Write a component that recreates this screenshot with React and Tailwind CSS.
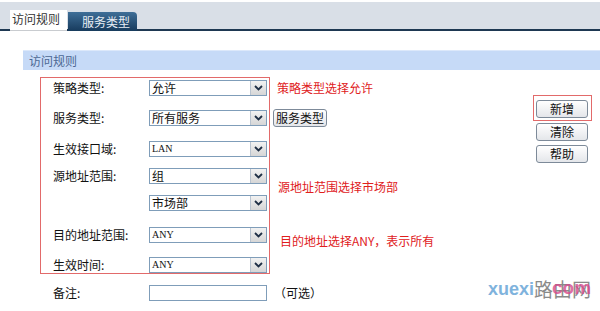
import React from 'react';

const Chevron = () => (
  <svg width="9" height="6" viewBox="0 0 9 6" className="block">
    <path d="M1 1 L4.5 4.5 L8 1" fill="none" stroke="#1f2f45" strokeWidth="1.8" />
  </svg>
);

const Select = ({ value, serif = false }) => (
  <div className="w-[118px] h-[16px] border border-[#7f9db9] bg-white flex items-stretch">
    <div
      className={`flex-1 pl-[2px] leading-[14px] text-[#111] ${
        serif ? "font-['Liberation_Serif',serif] text-[10px]" : 'text-[12px]'
      }`}
    >
      {value}
    </div>
    <div className="w-[16px] border-l border-[#b9c3cf] bg-gradient-to-b from-[#f2f2f2] to-[#d6d6d6] flex items-center justify-center">
      <Chevron />
    </div>
  </div>
);

const Btn = ({ children, className = '' }) => (
  <div
    className={`h-[18px] border border-[#7d8a99] rounded-[3px] bg-gradient-to-b from-[#ffffff] to-[#e4e6ea] flex items-center justify-center text-[12px] text-[#111] leading-none ${className}`}
  >
    {children}
  </div>
);

const Row = ({ label, value, serif, className = '' }) => (
  <div className={`flex items-center h-[16px] ${className}`}>
    <div className="w-[108px] shrink-0 pl-[12px] text-[12px] text-[#111] leading-none">{label}</div>
    <Select value={value} serif={serif} />
  </div>
);

const App = () => {
  return (
    <div className="w-[600px] h-[311px] bg-white relative overflow-hidden font-['Noto_Sans_CJK_SC','Noto_Sans',sans-serif] text-[12px]">
      {/* tab strip */}
      <div className="pt-[2px]">
        <div className="h-[29px] bg-[#d9dfe7] border-b-2 border-[#1e3852] flex items-end pl-[10px]">
          <div className="w-[57px] h-[21px] -mb-[2px] bg-white border-b border-[#c9ccd0] pl-[2px] pt-[1px] text-[12px] text-[#333] leading-[16px]">
            访问规则
          </div>
          <div className="w-[69px] h-[19px] -mb-[2px] ml-[1px] rounded-tr-[4px] bg-gradient-to-b from-[#3f6f98] to-[#173b5d] text-[#e8eef5] text-[12px] leading-[19px] pl-[14px]">
            服务类型
          </div>
        </div>
      </div>

      {/* section header */}
      <div className="mt-[19px] ml-[23px] h-[20px] bg-[#c6daf7] border-t border-[#dce8fa] pl-[6px] text-[12px] leading-[19px] text-[#4c6893]">
        访问规则
      </div>

      {/* form area */}
      <div className="flex mt-[7px]">
        <div className="pl-[40px]">
          <div className="w-[230px] h-[197px] border border-[#e26a6a]">
            <Row label="策略类型:" value="允许" className="mt-[2px]" />
            <Row label="服务类型:" value="所有服务" className="mt-[14px]" />
            <Row label="生效接口域:" value="LAN" serif className="mt-[15px]" />
            <Row label="源地址范围:" value="组" className="mt-[11px]" />
            <Row label="" value="市场部" className="mt-[11px]" />
            <Row label="目的地址范围:" value="ANY" serif className="mt-[16px]" />
            <Row label="生效时间:" value="ANY" serif className="mt-[14px]" />
          </div>
        </div>

        <div className="flex flex-col items-start ml-[3px]">
          <div className="mt-[3px] h-[16px] pl-[4px] leading-[16px] text-[12px] text-[#e0201c]">策略类型选择允许</div>
          <Btn className="mt-[13px] w-[54px]">服务类型</Btn>
          <div className="mt-[52px] h-[16px] pl-[5px] leading-[16px] text-[12px] text-[#e0201c]">源地址范围选择市场部</div>
          <div className="mt-[38px] h-[16px] pl-[7px] leading-[16px] text-[12px] text-[#e0201c]">目的地址选择ANY，表示所有</div>
        </div>

        <div className="ml-auto mr-[8px] flex flex-col items-start">
          <div className="mt-[18px] border border-[#e26a6a] pt-[4px] pb-[2px] pl-[2px] pr-[3px]">
            <Btn className="w-[52px]">新增</Btn>
          </div>
          <Btn className="w-[52px] ml-[3px] mt-[2px]">清除</Btn>
          <Btn className="w-[52px] ml-[3px] mt-[4px]">帮助</Btn>
        </div>
      </div>

      {/* remark row */}
      <div className="flex items-center h-[16px] mt-[11px] pl-[40px]">
        <div className="w-[109px] pl-[13px] text-[12px] text-[#111] leading-none">备注:</div>
        <div className="w-[118px] h-[16px] border border-[#7f9db9] bg-white" />
        <div className="ml-[7px] text-[12px] text-[#111] leading-none">（可选）</div>
      </div>

      {/* watermark */}
      <div className="absolute left-[488px] top-[279px] flex items-end leading-none">
        <span className="font-['Liberation_Sans',sans-serif] font-bold text-[18px] text-[#7fb3dd]">xuexi</span>
        <span className="relative text-[19px] text-[#8a8a8a] font-['Noto_Sans_CJK_SC',sans-serif]">
          路由网
          <span className="absolute left-[18px] bottom-[1px] font-['Liberation_Sans',sans-serif] font-bold text-[19px] text-[#d6488c]/80">com</span>
        </span>
      </div>
    </div>
  );
};

export default App;
